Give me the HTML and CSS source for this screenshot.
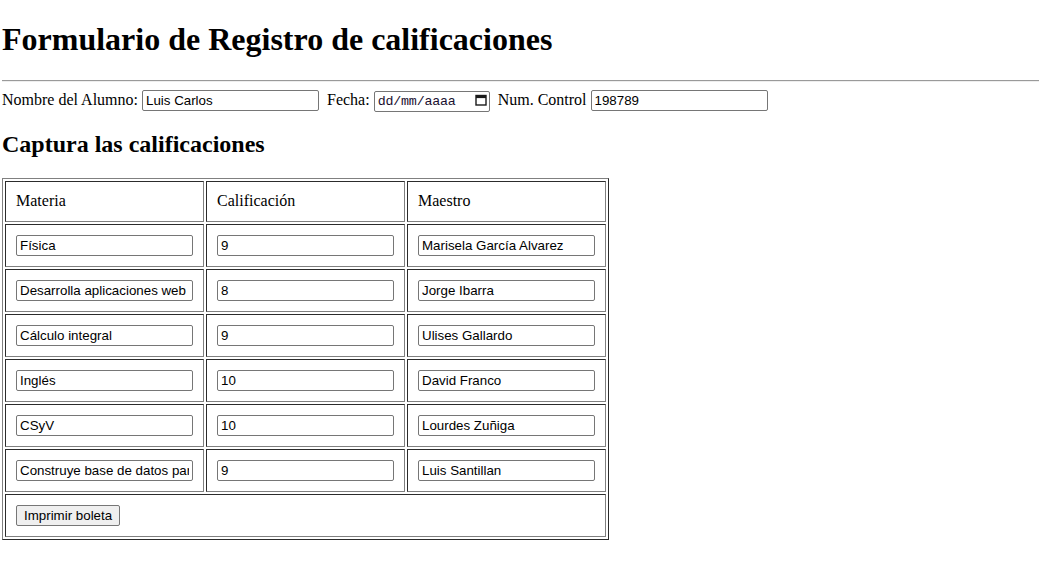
FILE: index.html
```html
<!DOCTYPE html>
<html lang="es">
<head>
<meta charset="utf-8">
<title>Formulario</title>
<link rel="stylesheet" href="styles.css">
</head>
<body>
<h1 class="title">Formulario de Registro de calificaciones</h1>
<hr class="rule">
<form class="form">
  <div class="line">Nombre del Alumno: <input class="field" type="text" value="Luis Carlos">&nbsp; Fecha: <span class="date"><span class="date-text">dd/mm/aaaa</span><svg class="cal" width="12" height="12" viewBox="0 0 12 12"><rect x="1" y="1.5" width="10" height="9.5" fill="none" stroke="#1a1a1a" stroke-width="1.4"/><rect x="1" y="1.5" width="10" height="2.6" fill="#1a1a1a"/></svg></span>&nbsp; Num. Control <input class="field" type="text" value="198789"></div>
  <h2 class="sub">Captura las calificaciones</h2>
  <table class="grid">
    <tr><td class="cell head">Materia</td><td class="cell head">Calificación</td><td class="cell head">Maestro</td></tr>
    <tr><td class="cell"><input class="field" type="text" value="Física"></td><td class="cell"><input class="field" type="text" value="9"></td><td class="cell"><input class="field" type="text" value="Marisela García Alvarez"></td></tr>
    <tr><td class="cell"><input class="field" type="text" value="Desarrolla aplicaciones web"></td><td class="cell"><input class="field" type="text" value="8"></td><td class="cell"><input class="field" type="text" value="Jorge Ibarra"></td></tr>
    <tr><td class="cell"><input class="field" type="text" value="Cálculo integral"></td><td class="cell"><input class="field" type="text" value="9"></td><td class="cell"><input class="field" type="text" value="Ulises Gallardo"></td></tr>
    <tr><td class="cell"><input class="field" type="text" value="Inglés"></td><td class="cell"><input class="field" type="text" value="10"></td><td class="cell"><input class="field" type="text" value="David Franco"></td></tr>
    <tr><td class="cell"><input class="field" type="text" value="CSyV"></td><td class="cell"><input class="field" type="text" value="10"></td><td class="cell"><input class="field" type="text" value="Lourdes Zuñiga"></td></tr>
    <tr><td class="cell"><input class="field" type="text" value="Construye base de datos para"></td><td class="cell"><input class="field" type="text" value="9"></td><td class="cell"><input class="field" type="text" value="Luis Santillan"></td></tr>
    <tr><td class="cell" colspan="3"><button class="btn" type="button">Imprimir boleta</button></td></tr>
  </table>
</form>
</body>
</html>
```
FILE: styles.css
```css
html, body {
  background: #fff;
}
body {
  margin: 0 0 0 2px;
  font-family: "Liberation Serif", "Times New Roman", serif;
  font-size: 16px;
  color: #000;
}
.title {
  font-size: 32px;
  font-weight: bold;
  margin: 21.44px 0;
}
.rule {
  margin: 8px 0;
  border: 0;
  border-top: 1px solid #9a9a9a;
  border-bottom: 1px solid #eeeeee;
  height: 0;
}
.form {
  margin: 0;
}
.field {
  font-family: "Liberation Sans", Arial, sans-serif;
  font-size: 13.3333px;
  width: 177px;
  height: 21px;
  box-sizing: border-box;
  padding: 1px 3px;
  border: 1px solid #767676;
  border-radius: 2px;
  color: #000;
  background: #fff;
  vertical-align: baseline;
}
.date {
  display: inline-block;
  width: 116px;
  height: 21px;
  box-sizing: border-box;
  padding: 1px 3px 1px 3px;
  border: 1px solid #767676;
  border-radius: 2px;
  line-height: 17px;
  white-space: nowrap;
  vertical-align: baseline;
  font-family: "Liberation Mono", "DejaVu Sans Mono", monospace;
  font-size: 13.3333px;
}
.date-text {
  color: #1a1030;
  letter-spacing: -0.2px;
}
.cal {
  display: inline-block;
  margin-left: 19px;
  vertical-align: -1px;
}
.sub {
  font-size: 24px;
  font-weight: bold;
  margin: 19.5px 0 19.5px;
}
.grid {
  border-collapse: separate;
  border-spacing: 2px;
  border: 1px outset #808080;
}
.cell {
  border: 1px inset #808080;
  padding: 10px;
  width: 177px;
}
.head {
  height: 19px;
}
.btn {
  font-family: "Liberation Sans", Arial, sans-serif;
  font-size: 13.3333px;
  padding: 1px 7px;
  height: 21px;
  border: 1px solid #767676;
  border-radius: 2px;
  background: #efefef;
  color: #000;
}
```
